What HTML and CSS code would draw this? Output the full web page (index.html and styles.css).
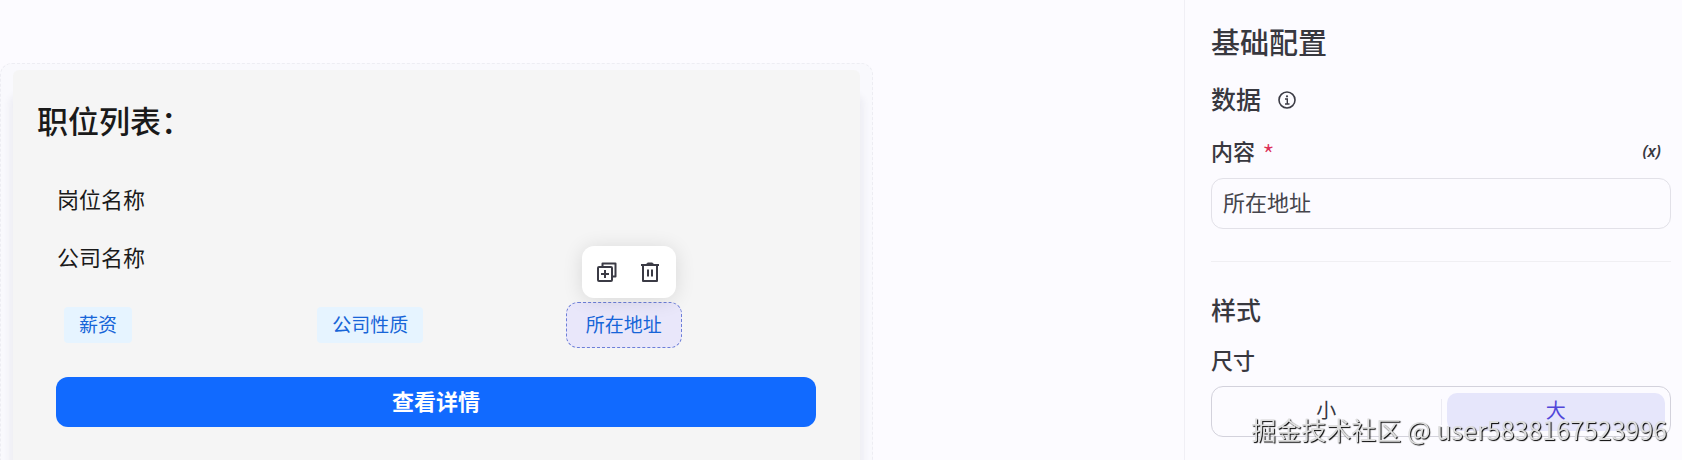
FILE: index.html
```html
<!DOCTYPE html>
<html lang="zh-CN">
<head>
    <meta charset="UTF-8">
    <title>基础配置</title>
    <link rel="stylesheet" href="styles.css">
</head>
<body>
    <div class="app">
        <main class="canvas">
            <section class="frame">
                <div class="card">
                    <h1 class="card-title">职位列表：</h1>
                    <div class="card-body">
                        <div class="field">岗位名称</div>
                        <div class="field">公司名称</div>
                        <div class="tags">
                            <div class="tag-cell"><span class="tag">薪资</span></div>
                            <div class="tag-cell"><span class="tag">公司性质</span></div>
                            <div class="tag-cell selected">
                                <span class="tag">所在地址</span>
                                <div class="toolbar">
                                    <button type="button" class="icon-btn" aria-label="复制">
                                        <svg width="20" height="20" viewBox="0 0 20 20" fill="none" stroke="#3b3b45" stroke-width="2" stroke-linejoin="round">
                                            <path d="M5.500 5V1.500h13v13H15"/>
                                            <rect x="1" y="5" width="14" height="14" rx="1"/>
                                            <path d="M8 8v8M4 12h8"/>
                                        </svg>
                                    </button>
                                    <button type="button" class="icon-btn" aria-label="删除">
                                        <svg width="20" height="20" viewBox="0 0 20 20" fill="none" stroke="#3b3b45" stroke-width="2">
                                            <path d="M1 3h18"/>
                                            <path d="M6.500 2.500L7.500 1h5l1 1.500z" fill="#3b3b45" stroke-width="1"/>
                                            <path d="M3 3v16h14V3" stroke-linejoin="round"/>
                                            <path d="M8 7.500v7M12 7.500v7"/>
                                        </svg>
                                    </button>
                                </div>
                            </div>
                        </div>
                        <button type="button" class="primary">查看详情</button>
                    </div>
                </div>
            </section>
        </main>
        <aside class="panel">
            <h2 class="panel-title">基础配置</h2>
            <div class="section">
                <h3 class="section-title">数据
                    <svg width="18" height="22" viewBox="0 -4 18 22" fill="none" stroke="#3b3b45">
                        <circle cx="9" cy="9" r="8" stroke-width="1.600"/>
                        <path d="M7 8h2.300v5M7 13h4.500" stroke-width="1.400"/>
                        <circle cx="9" cy="5.300" r="1.100" fill="#3b3b45" stroke="none"/>
                    </svg>
                </h3>
                <div class="label-row">
                    <label for="content">内容 <span class="required">*</span></label>
                    <button type="button" class="expr">(x)</button>
                </div>
                <input id="content" class="text-input" type="text" value="所在地址">
            </div>
            <div class="section">
                <h3 class="section-title">样式</h3>
                <fieldset class="size">
                    <legend>尺寸</legend>
                    <div class="segmented">
                        <input type="radio" id="size-small" name="size">
                        <label for="size-small">小</label>
                        <span class="split"></span>
                        <input type="radio" id="size-large" name="size" checked>
                        <label for="size-large">大</label>
                    </div>
                </fieldset>
            </div>
        </aside>
    </div>
    <div class="watermark">掘金技术社区 @ user5838167523996</div>
</body>
</html>
```
FILE: styles.css
```css
* {
    box-sizing: border-box;
}
body {
    margin: 0;
    background: #fcfbff;
    color: #1a1a1a;
    font-family: "Noto Sans CJK SC", sans-serif;
}
h1, h2, h3 {
    margin: 0;
    font-weight: 500;
}
button, input {
    font-family: inherit;
    margin: 0;
}
.app {
    display: flex;
    height: 100vh;
    overflow: hidden;
}
.canvas {
    flex: 1;
    display: flex;
    min-width: 0;
    padding-top: 63px;
}
.frame {
    flex: 1;
    max-width: 873px;
    padding: 6px 12px 0;
    border: 1px dashed #ededf3;
    border-bottom: none;
    border-radius: 12px 12px 0 0;
    background: #f9f9fd;
}
.card {
    height: 100%;
    padding: 28px 44px 0 24px;
    background: #f5f5f5;
    border-radius: 6px 6px 0 0;
    box-shadow: 0 28px 6px 4px #eeeef4;
}
.card-title {
    font-size: 31px;
    line-height: 44px;
}
.card-body {
    padding: 27px 0 0 19px;
}
.field {
    padding-left: 1px;
    font-size: 22px;
    line-height: 58px;
}
.tags {
    display: grid;
    grid-template-columns: repeat(3, 1fr);
    margin-top: 17px;
}
.tag-cell {
    position: relative;
    justify-self: start;
    margin-left: 3px;
    padding: 4px;
    border: 1px dashed transparent;
    border-radius: 12px;
}
.tag {
    display: block;
    padding: 0 15px 2px;
    border-radius: 4px;
    background: #e6f4ff;
    color: #1765d8;
    font-size: 19px;
    line-height: 34px;
}
.selected {
    border-color: #6d7fd8;
    background: #e9e7fa;
}
.selected .tag {
    background: none;
}
.toolbar {
    position: absolute;
    left: 15px;
    bottom: 49px;
    display: flex;
    gap: 4px;
    padding: 6px;
    border-radius: 12px;
    background: #fff;
    box-shadow: 0 2px 20px rgba(0, 0, 0, 0.12);
}
.icon-btn {
    display: flex;
    align-items: center;
    justify-content: center;
    width: 39px;
    height: 40px;
    padding: 0;
    border: none;
    background: none;
}
.primary {
    display: block;
    width: 100%;
    height: 50px;
    margin-top: 29px;
    padding: 0 0 4px;
    border: none;
    border-radius: 12px;
    background: #116aff;
    color: #fff;
    font-size: 22px;
    font-weight: 700;
}
.panel {
    flex: none;
    width: 498px;
    padding: 20px 11px 0 26px;
    border-left: 1px solid #f0eff5;
    color: #38383f;
}
.panel-title {
    font-size: 29px;
    line-height: 42px;
}
.section {
    padding: 18px 0 32px;
    border-bottom: 1px solid #f0eff3;
}
.section + .section {
    padding-top: 29px;
    border-bottom: none;
}
.section-title {
    display: flex;
    align-items: center;
    gap: 17px;
    font-size: 25px;
    line-height: 36px;
}
.label-row {
    display: flex;
    align-items: center;
    justify-content: space-between;
    height: 32px;
    margin: 18px 0 12px;
    font-size: 22px;
    font-weight: 500;
    line-height: 32px;
}
.label-row label {
    display: flex;
    gap: 7px;
}
.required {
    height: 32px;
    color: #dc3058;
    font-size: 29px;
    font-weight: 300;
    line-height: 40px;
}
.expr {
    padding: 2px 10px 0;
    border: none;
    background: none;
    color: #38383f;
    font-family: "Noto Sans", sans-serif;
    font-size: 16px;
    font-style: italic;
    font-weight: 600;
}
.text-input {
    display: block;
    width: 100%;
    height: 51px;
    padding: 0 11px 5px;
    border: 1px solid #e2e1e8;
    border-radius: 12px;
    background: transparent;
    color: #45454c;
    font-size: 22px;
}
.size {
    margin: 16px 0 0;
    padding: 0;
    border: none;
}
.size legend {
    padding: 0;
    font-size: 22px;
    font-weight: 500;
    line-height: 32px;
}
.segmented {
    display: flex;
    align-items: center;
    height: 51px;
    margin-top: 11px;
    padding: 5px;
    border: 1px solid #d3d2dc;
    border-radius: 12px;
}
.segmented input {
    position: absolute;
    opacity: 0;
}
.segmented label {
    flex: 1;
    padding-bottom: 4px;
    border-radius: 10px;
    font-size: 20px;
    line-height: 34px;
    text-align: center;
}
.segmented input:checked + label {
    background: #e6e6fb;
    color: #5147d9;
}
.split {
    width: 1px;
    height: 26px;
    margin: 0 5px;
    background: #ebeaf2;
}
.watermark {
    position: fixed;
    right: 15px;
    bottom: 13px;
    color: #dedede;
    font-size: 25px;
    line-height: 36px;
    text-shadow: 1px 1px 1px #000;
}
```
